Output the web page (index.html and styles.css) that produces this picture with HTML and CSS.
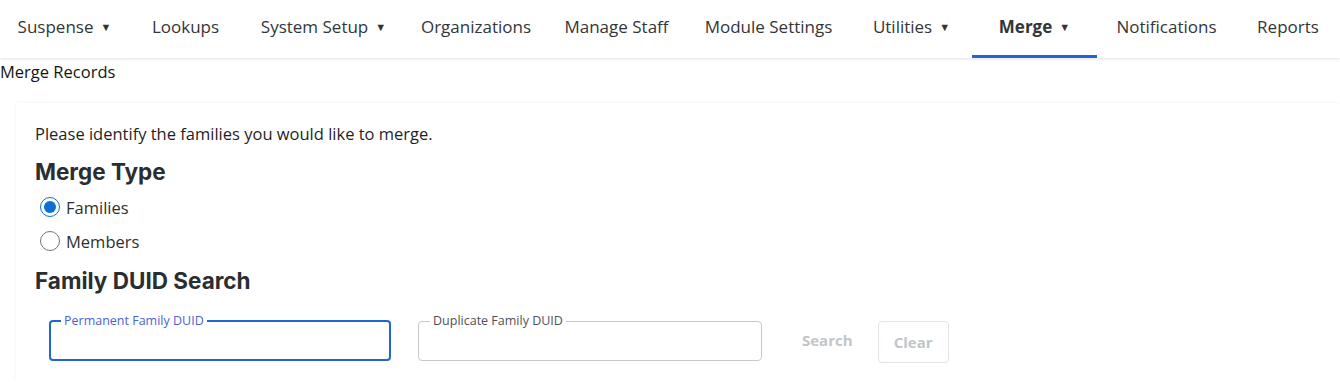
FILE: index.html
```html
<!DOCTYPE html>
<html lang="en">
<head>
    <meta charset="UTF-8">
    <meta name="viewport" content="width=device-width, initial-scale=1.0">
    <title>Merge Records</title>
    <link rel="stylesheet" href="styles.css">
</head>
<body>
    <nav class="top-nav">
        <a class="nav-item">Suspense <span class="caret">&#9660;</span></a>
        <a class="nav-item">Lookups</a>
        <a class="nav-item">System Setup <span class="caret">&#9660;</span></a>
        <a class="nav-item">Organizations</a>
        <a class="nav-item">Manage Staff</a>
        <a class="nav-item">Module Settings</a>
        <a class="nav-item">Utilities <span class="caret">&#9660;</span></a>
        <a class="nav-item active">Merge <span class="caret">&#9660;</span></a>
        <a class="nav-item">Notifications</a>
        <a class="nav-item">Reports</a>
    </nav>

    <div class="page-title">Merge Records</div>

    <div class="card">
        <p class="intro">Please identify the families you would like to merge.</p>

        <h2>Merge Type</h2>
        <label class="radio-row">
            <input type="radio" name="mergeType" checked>
            <span>Families</span>
        </label>
        <label class="radio-row">
            <input type="radio" name="mergeType">
            <span>Members</span>
        </label>

        <h2>Family DUID Search</h2>
        <div class="search-row">
            <fieldset class="field focused">
                <legend>Permanent Family DUID</legend>
                <input type="text">
            </fieldset>
            <fieldset class="field">
                <legend>Duplicate Family DUID</legend>
                <input type="text">
            </fieldset>
            <button class="btn btn-text" disabled>Search</button>
            <button class="btn btn-outline" disabled>Clear</button>
        </div>
    </div>
</body>
</html>
```

FILE: styles.css
```css
body {
    margin: 0;
    font-family: 'Open Sans', sans-serif;
    color: #151515;
    background-color: #ffffff;
}

.top-nav {
    display: grid;
    grid-template-columns: 129px 113px 163px 142px 139px 165px 121px 125px 139px 104px;
    height: 58px;
    box-shadow: 0 1px 3px rgba(0, 0, 0, 0.12);
}
.nav-item {
    display: flex;
    align-items: center;
    justify-content: center;
    gap: 7px;
    font-size: 17px;
    color: #333638;
    border-bottom: 3px solid transparent;
    padding-bottom: 2px;
    box-sizing: border-box;
    white-space: nowrap;
}
.nav-item .caret {
    font-size: 11px;
}
.nav-item.active {
    font-weight: 700;
    border-bottom-color: #1f66d1;
}

.page-title {
    font-size: 16.5px;
    line-height: 24px;
    margin-top: 2px;
}

.card {
    margin: 19px 0 0 16px;
    padding: 19px 20px 20px 19px;
    box-shadow: 0 0 4px rgba(0, 0, 0, 0.06);
    border-radius: 3px;
}
.intro {
    margin: 0;
    font-size: 16.5px;
    line-height: 24px;
    color: #1f1f1f;
}
h2 {
    font-family: 'Inter', sans-serif;
    font-weight: 700;
    font-size: 22.5px;
    line-height: 28px;
    color: #2b2e31;
    margin: 12px 0 4px;
}
.radio-row + h2 {
    margin-top: 9px;
}

.radio-row {
    display: flex;
    align-items: center;
    gap: 6px;
    height: 34px;
    font-size: 16.5px;
    color: #2d2f31;
}
.radio-row input {
    width: 20px;
    height: 20px;
    margin: 0 0 0 5px;
    accent-color: #0a6fd7;
}

.search-row {
    display: flex;
    align-items: flex-end;
    margin: 20px 0 0 14px;
}
.field {
    margin: 0 27px 0 0;
    padding: 0 12px;
    width: 342px;
    height: 46px;
    box-sizing: border-box;
    border: 1px solid #c8c8c8;
    border-radius: 4px;
    min-width: 0;
}
.field + .field {
    width: 344px;
}
.field legend {
    font-size: 12.5px;
    line-height: 12px;
    padding: 0 3px;
    margin-left: -1px;
    color: #4f5256;
}
.field.focused {
    border: 2px solid #1f66d1;
    padding: 0 11px;
}
.field.focused legend {
    color: #4a63d0;
}
.field input {
    border: none;
    outline: none;
    width: 100%;
    height: 32px;
    font-size: 16px;
    padding: 0;
    background: transparent;
}

.btn {
    font-family: 'Open Sans', sans-serif;
    font-weight: 700;
    font-size: 15px;
    color: #c1c5c9;
    background: #ffffff;
    height: 42px;
    border-radius: 4px;
}
.btn-text {
    border: none;
    padding: 0 13px;
    margin: 0 12px 0 0;
}
.btn-outline {
    border: 1px solid #e1e3e5;
    width: 71px;
    margin-bottom: -2px;
}
```
